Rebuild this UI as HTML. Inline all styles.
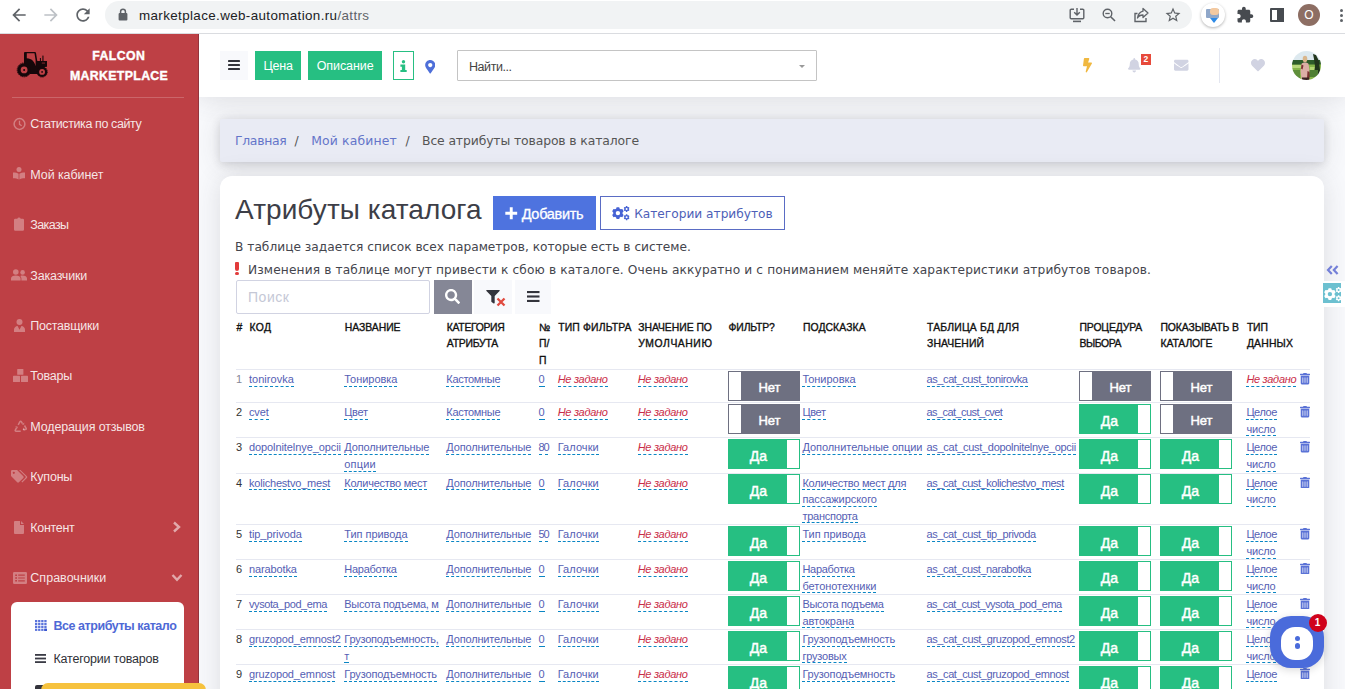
<!DOCTYPE html><html lang="ru"><head><meta charset="utf-8"><title>Все атрибуты товаров в каталоге</title><style>
*{box-sizing:border-box;margin:0;padding:0}
html,body{width:1345px;height:689px;overflow:hidden;background:#f8f9fc;font-family:"Liberation Sans",sans-serif;}
.a{position:absolute}
#chrome{left:0;top:0;width:1345px;height:34px;background:#fff;border-bottom:1px solid #dadce0}
#url{left:105px;top:1px;width:1087px;height:28px;border-radius:14px;background:#f1f3f4}
#side{left:0;top:34px;width:199px;height:655px;background:#be4045}
#top{left:199px;top:34px;width:1146px;height:63px;background:#fff;box-shadow:0 2px 26px rgba(58,59,69,.15)}
.si{font-size:12.5px;line-height:16px;color:rgba(255,255,255,.88)}
#bc{left:220px;top:118.5px;width:1104px;height:43px;background:#e9ebf4;box-shadow:0 2px 26px rgba(58,59,69,.15),0 2px 9px rgba(58,59,69,.16);border-radius:2px}
.bct{font-family:"DejaVu Sans","Liberation Sans",sans-serif;font-size:12.4px;line-height:17px;color:#555}
#card{left:220px;top:176px;width:1104px;height:540px;background:#fff;border-radius:12px;box-shadow:0 2px 26px rgba(58,59,69,.15)}
.btn{height:34px;top:196px}
.p{font-family:"DejaVu Sans","Liberation Sans",sans-serif;font-size:12.2px;line-height:16px;color:#44454d}
.th{font-size:10.4px;line-height:16.5px;color:#111;-webkit-text-stroke:0.35px #111}
.td{font-size:11px;line-height:16.5px;color:#333;}
.td u,.td i{text-decoration:none;border-bottom:1px dashed #0a86c4;color:#5560b4;padding-bottom:0.8px}
.td i{color:#c92c47;font-style:italic}
.td s{text-decoration:none;margin-right:-1.5px}
.hr{left:236px;width:1074px;height:1px;background:#e6e8f1}
.tg{width:72px;height:30px;overflow:hidden;color:#fff;font-size:13px;line-height:30px;text-align:center;-webkit-text-stroke:0.45px #fff}
.tg.on{background:#26bf82;border:1px solid #26bf82}
.tg.off{background:#6e7081;border:1px solid #6e7081}
.tg b{position:absolute;top:0;width:12px;height:28px;background:#fff}
.tg.on b{right:0}
.tg.off b{left:0;width:11.5px}
.tg.on span{position:absolute;left:0;width:59px;top:1px;font-size:14px}
.tg.off span{position:absolute;left:11px;width:59px;top:1px}
</style></head><body>
<div class="a" style="left:0;top:0;z-index:9">
<div id="chrome" class="a"></div>
<div id="url" class="a"></div>
<div class="a " style="left:139px;top:7px;white-space:nowrap;font-size:13.4px;line-height:17px;color:#202124;letter-spacing:0.373px;">marketplace.web-automation.ru<span style="color:#5f6368">/attrs</span></div>
<svg class="a" style="left:9px;top:5px;" width="20" height="20" viewBox="0 0 24 24"><path d="M20 11H7.83l5.59-5.59L12 4l-8 8 8 8 1.41-1.41L7.83 13H20v-2z" fill="#5f6368" /></svg>
<svg class="a" style="left:41px;top:5px;" width="20" height="20" viewBox="0 0 24 24"><path d="M12 4l-1.41 1.41L16.17 11H4v2h12.17l-5.58 5.59L12 20l8-8z" fill="#bdc1c6" /></svg>
<svg class="a" style="left:73px;top:5px;" width="20" height="20" viewBox="0 0 24 24"><path d="M17.65 6.35C16.2 4.9 14.21 4 12 4c-4.42 0-7.99 3.58-7.99 8s3.57 8 7.99 8c3.73 0 6.84-2.55 7.73-6h-2.08c-.82 2.33-3.04 4-5.65 4-3.31 0-6-2.69-6-6s2.69-6 6-6c1.66 0 3.14.69 4.22 1.78L13 11h7V4l-2.35 2.35z" fill="#5f6368" /></svg>
<svg class="a" style="left:118px;top:8px;" width="10" height="13" viewBox="0 0 10 13"><rect x="0.6" y="5" width="8.8" height="7.4" rx="1" fill="#5f6368"/><path d="M2.6 5.5V3.6a2.4 2.4 0 0 1 4.8 0V5.5" fill="none" stroke="#5f6368" stroke-width="1.5"/></svg>
<svg class="a" style="left:1069px;top:8px;" width="16" height="15" viewBox="0 0 16 15"><path d="M5 1.2H2.2a1 1 0 0 0-1 1v7.6a1 1 0 0 0 1 1H13.8a1 1 0 0 0 1-1V2.2a1 1 0 0 0-1-1H11" fill="none" stroke="#5f6368" stroke-width="1.4"/><path d="M8 0v6.5M5.2 4.2L8 7l2.8-2.8" fill="none" stroke="#5f6368" stroke-width="1.4"/><rect x="4" y="12.6" width="8" height="1.6" fill="#5f6368"/></svg>
<svg class="a" style="left:1102px;top:8px;" width="14" height="14" viewBox="0 0 14 14"><circle cx="5.5" cy="5.5" r="4.3" fill="none" stroke="#5f6368" stroke-width="1.4"/><path d="M8.7 8.7L13 13" stroke="#5f6368" stroke-width="1.6"/><path d="M3.3 5.5h4.4" stroke="#5f6368" stroke-width="1.3"/></svg>
<svg class="a" style="left:1133px;top:7px;" width="16" height="16" viewBox="0 0 16 16"><path d="M4.5 6.5H2v8h11V11" fill="none" stroke="#5f6368" stroke-width="1.4"/><path d="M10 1.5L15 6l-5 4.5V8C7 8 5.5 9 4.5 11 5 7.5 7 5 10 4.2z" fill="none" stroke="#5f6368" stroke-width="1.3" stroke-linejoin="round"/></svg>
<svg class="a" style="left:1164px;top:6px;" width="18" height="18" viewBox="0 0 24 24"><path d="M22 9.24l-7.19-.62L12 2 9.19 8.63 2 9.24l5.46 4.73L5.82 21 12 17.27 18.18 21l-1.63-7.03L22 9.24zM12 15.4l-3.76 2.27 1-4.28-3.32-2.88 4.38-.38L12 6.1l1.71 4.04 4.38.38-3.32 2.88 1 4.28L12 15.4z" fill="#5f6368" /></svg>
<div class="a" style="left:1201px;top:3px;width:24px;height:24px;border-radius:12px;background:#fff;box-shadow:0 1px 3px rgba(0,0,0,.3)"></div>
<div class="a" style="left:1206px;top:9px;width:13px;height:9px;background:#8fa7c9;border-radius:1px"></div>
<div class="a" style="left:1210px;top:8px;width:9px;height:7px;background:#f3c9a0;border-radius:3px"></div>
<div class="a" style="left:1210px;top:18px;width:0;height:0;border-left:4px solid transparent;border-right:4px solid transparent;border-top:5px solid #2d8ae6"></div>
<svg class="a" style="left:1236px;top:6px;" width="18" height="18" viewBox="0 0 24 24"><path d="M20.5 11H19V7c0-1.1-.9-2-2-2h-4V3.5C13 2.12 11.88 1 10.5 1S8 2.12 8 3.5V5H4c-1.1 0-1.99.9-1.99 2v3.8H3.5c1.49 0 2.7 1.21 2.7 2.7s-1.21 2.7-2.7 2.7H2V20c0 1.1.9 2 2 2h3.8v-1.5c0-1.49 1.21-2.7 2.7-2.7 1.49 0 2.7 1.21 2.7 2.7V22H17c1.1 0 2-.9 2-2v-4h1.5c1.38 0 2.5-1.12 2.5-2.5S21.88 11 20.5 11z" fill="#474b50" /></svg>
<div class="a" style="left:1270px;top:8px;width:14px;height:14px;border:2px solid #474b50;border-radius:1px"></div><div class="a" style="left:1277px;top:8px;width:7px;height:14px;background:#474b50"></div>
<div class="a" style="left:1298px;top:4px;width:22px;height:22px;border-radius:11px;background:#8d6e63;color:#fff;font-size:12px;line-height:22px;text-align:center">O</div>
<div class="a" style="left:1339.5px;top:9px;width:3px;height:3px;border-radius:2px;background:#5f6368"></div>
<div class="a" style="left:1339.5px;top:14px;width:3px;height:3px;border-radius:2px;background:#5f6368"></div>
<div class="a" style="left:1339.5px;top:19px;width:3px;height:3px;border-radius:2px;background:#5f6368"></div>
</div>
<div class="a" style="left:0;top:0;z-index:8">
<div id="side" class="a"></div>
<div class="a" style="left:198px;top:34px;width:1px;height:655px;background:rgba(40,20,40,.28)"></div>
<div class="a " style="left:92.2px;top:49.4px;white-space:nowrap;color:#fff;font-weight:bold;font-size:12.3px;line-height:14px;-webkit-text-stroke:0.4px #fff;letter-spacing:0.447px;">FALCON</div>
<div class="a " style="left:70px;top:68.5px;white-space:nowrap;color:#fff;font-weight:bold;font-size:12.3px;line-height:14px;-webkit-text-stroke:0.4px #fff;letter-spacing:0.352px;">MARKETPLACE</div>
<div class="a" style="left:11.5px;top:97px;width:172.5px;height:1px;background:rgba(255,255,255,.2)"></div>
<svg class="a" style="left:10px;top:44px;" width="50" height="42" viewBox="10 44 50 42"><g fill="#16070a"><path d="M24 53c0-.7.5-1.1 1.1-1.1h9.8c.6 0 1 .4 1.1 1l1.3 8.1H47v5.8l-4 .4-4.5 6.8H30l-6-8z"/><rect x="39.9" y="58" width="1" height="3.4"/><rect x="42.4" y="55.6" width="1.1" height="5.8"/><circle cx="24.1" cy="69.9" r="6.7"/><circle cx="24.1" cy="69.9" r="6.9" fill="none" stroke="#16070a" stroke-width="1" stroke-dasharray="1.3 .7"/><circle cx="42.1" cy="71.9" r="5.1"/><circle cx="42.1" cy="71.9" r="5.2" fill="none" stroke="#16070a" stroke-width=".9" stroke-dasharray="1.2 .65"/></g><path d="M26.8 53.3h7.7l1.1 7v5.9c-1-4.8-4-7.8-8.8-8z" fill="#be4045"/><rect x="41.8" y="62.3" width="3.2" height="1.6" fill="#5c1c20"/><circle cx="24.1" cy="69.9" r="3.4" fill="#be4045"/><circle cx="24.1" cy="69.9" r="1" fill="#16070a"/><circle cx="42.1" cy="71.9" r="2.9" fill="#be4045"/><circle cx="42.1" cy="71.9" r=".9" fill="#16070a"/></svg>
<div class="a si" style="left:30.3px;top:116.2px;white-space:nowrap;letter-spacing:-0.396px;">Статистика по сайту</div>
<svg class="a" style="left:13px;top:117px;" width="14" height="14" viewBox="0 0 14 14"><circle cx="6.5" cy="7" r="5.4" fill="none" stroke="rgba(255,255,255,.33)" stroke-width="1.5"/><path d="M6.5 3.8V7.3l2.2 1.4" fill="none" stroke="rgba(255,255,255,.33)" stroke-width="1.3"/></svg>
<div class="a si" style="left:30.3px;top:166.6px;white-space:nowrap;letter-spacing:-0.077px;">Мой кабинет</div>
<svg class="a" style="left:13px;top:167px;" width="12" height="13" viewBox="0 0 12 13"><circle cx="6" cy="2.6" r="2.5" fill="rgba(255,255,255,.33)"/><path d="M0 5.5c2.5 0 4.5.4 5.6 1.3v5.6C4.5 11.6 2.5 11.2 0 11.2zM12 5.5c-2.5 0-4.5.4-5.6 1.3v5.6c1.1-.8 3.1-1.2 5.6-1.2z" fill="rgba(255,255,255,.33)"/></svg>
<div class="a si" style="left:30.3px;top:217.1px;white-space:nowrap;letter-spacing:-0.616px;">Заказы</div>
<svg class="a" style="left:14px;top:217px;" width="10" height="14" viewBox="0 0 10 14"><path d="M1.2 1.8h2.1a1.8 1.8 0 0 1 3.4 0h2.1a1.2 1.2 0 0 1 1.2 1.2v9.6a1.2 1.2 0 0 1-1.2 1.2H1.2A1.2 1.2 0 0 1 0 12.6V3a1.2 1.2 0 0 1 1.2-1.2z" fill="rgba(255,255,255,.33)"/></svg>
<div class="a si" style="left:30.3px;top:267.6px;white-space:nowrap;letter-spacing:-0.166px;">Заказчики</div>
<svg class="a" style="left:11px;top:269px;" width="16" height="12" viewBox="0 0 16 12"><circle cx="4.8" cy="3" r="2.8" fill="rgba(255,255,255,.33)"/><circle cx="11.6" cy="3.4" r="2.3" fill="rgba(255,255,255,.33)"/><path d="M0 11.5V9.8c0-2 2-3.2 4.8-3.2s4.8 1.2 4.8 3.2v1.7zM10.4 11.5V9.6c0-1-.4-1.9-1.1-2.6.7-.3 1.5-.4 2.3-.4 2.5 0 4.4 1.1 4.4 3v1.9z" fill="rgba(255,255,255,.33)"/></svg>
<div class="a si" style="left:30.3px;top:318px;white-space:nowrap;letter-spacing:-0.244px;">Поставщики</div>
<svg class="a" style="left:14px;top:319px;" width="11" height="13" viewBox="0 0 11 13"><circle cx="5.5" cy="3" r="3" fill="rgba(255,255,255,.33)"/><path d="M0 13v-2.2c0-2.3 1.6-3.8 3.6-3.9l1.9 3.8 1.9-3.8c2 .1 3.6 1.6 3.6 3.9V13z" fill="rgba(255,255,255,.33)"/></svg>
<div class="a si" style="left:30.3px;top:368.4px;white-space:nowrap;letter-spacing:-0.2px;">Товары</div>
<svg class="a" style="left:13px;top:369px;" width="15" height="13" viewBox="0 0 15 13"><rect x="4.2" y="0" width="6.2" height="5.8" rx=".6" fill="rgba(255,255,255,.33)"/><rect x="0" y="6.8" width="7" height="6.2" rx=".6" fill="rgba(255,255,255,.33)"/><rect x="8" y="6.8" width="7" height="6.2" rx=".6" fill="rgba(255,255,255,.33)"/></svg>
<div class="a si" style="left:30.3px;top:418.9px;white-space:nowrap;letter-spacing:-0.143px;">Модерация отзывов</div>
<svg class="a" style="left:14px;top:420px;" width="13" height="13" viewBox="0 0 13 13"><path d="M4.2 4.8L6 1.6c.3-.5 1-.5 1.3 0l1.2 2M10.5 5.5l1.7 2.9c.3.5-.1 1.2-.7 1.2H9M6.7 11.3H2c-.6 0-1-.6-.7-1.2l1.2-2.2" fill="none" stroke="rgba(255,255,255,.33)" stroke-width="1.5"/><path d="M7.8 4.6l2.3.2.2-2.4zM9.8 7.6L8.6 9.7l2.2 1zM1 6.8l2.3-.6.7 2.3z" fill="rgba(255,255,255,.33)"/></svg>
<div class="a si" style="left:30.3px;top:469.4px;white-space:nowrap;letter-spacing:-0.228px;">Купоны</div>
<svg class="a" style="left:11px;top:470px;" width="17" height="13" viewBox="0 0 17 13"><path d="M0 1.2A1.2 1.2 0 0 1 1.2 0h4.9l6.2 6.2a1.2 1.2 0 0 1 0 1.7l-4.4 4.4a1.2 1.2 0 0 1-1.7 0L0 6.1zM2.8 3.9a1.1 1.1 0 1 0 0-2.2 1.1 1.1 0 0 0 0 2.2z" fill="rgba(255,255,255,.33)" fill-rule="evenodd"/><path d="M8 0h1.4l6.5 6.3a1.2 1.2 0 0 1 0 1.7l-4.6 4.6-.9-.9 4-4a1 1 0 0 0 0-1.4z" fill="rgba(255,255,255,.33)"/></svg>
<div class="a si" style="left:30.3px;top:519.8px;white-space:nowrap;letter-spacing:-0.302px;">Контент</div>
<svg class="a" style="left:14px;top:521px;" width="10" height="13" viewBox="0 0 10 13"><path d="M1 0h5v3.5a.5.5 0 0 0 .5.5H10v8a1 1 0 0 1-1 1H1a1 1 0 0 1-1-1V1a1 1 0 0 1 1-1zM7 0l3 3H7z" fill="rgba(255,255,255,.33)"/></svg>
<div class="a si" style="left:30.3px;top:570.2px;white-space:nowrap;letter-spacing:0.027px;">Справочники</div>
<svg class="a" style="left:13px;top:572px;" width="14" height="12" viewBox="0 0 14 12"><path d="M1.2 0h11.6A1.2 1.2 0 0 1 14 1.2v9.6a1.2 1.2 0 0 1-1.2 1.2H1.2A1.2 1.2 0 0 1 0 10.8V1.2A1.2 1.2 0 0 1 1.2 0zM2.2 2.4v1.6h1.8V2.4zM5.2 2.6v1.2h6.6V2.6zM2.2 5.2v1.6h1.8V5.2zM5.2 5.4v1.2h6.6V5.4zM2.2 8v1.6h1.8V8zM5.2 8.2v1.2h6.6V8.2z" fill="rgba(255,255,255,.33)" fill-rule="evenodd"/></svg>
<svg class="a" style="left:172px;top:521px;" width="9" height="12" viewBox="0 0 9 12"><path d="M2 1.5L7 6 2 10.5" fill="none" stroke="rgba(255,255,255,.55)" stroke-width="2.4"/></svg>
<svg class="a" style="left:171px;top:573px;" width="12" height="9" viewBox="0 0 12 9"><path d="M1.5 2L6 6.8 10.5 2" fill="none" stroke="rgba(255,255,255,.55)" stroke-width="2.4"/></svg>
<div class="a" style="left:11px;top:602px;width:173px;height:100px;background:#fff;border-radius:6px"></div>
<div class="a " style="left:53.5px;top:618px;white-space:nowrap;font-size:12.5px;line-height:16px;font-weight:bold;color:#4e69d6;letter-spacing:-0.451px;">Все атрибуты катало</div>
<div class="a " style="left:53.5px;top:651px;white-space:nowrap;font-size:12.5px;line-height:16px;color:#2f3037;letter-spacing:-0.204px;">Категории товаров</div>
<svg class="a" style="left:35px;top:620px;" width="12" height="11" viewBox="0 0 12 11"><rect x="0" y="0" width="2.3" height="2.2" fill="#5a73db"/><rect x="3.1" y="0" width="2.3" height="2.2" fill="#5a73db"/><rect x="6.2" y="0" width="2.3" height="2.2" fill="#5a73db"/><rect x="9.3" y="0" width="2.3" height="2.2" fill="#5a73db"/><rect x="0" y="2.9" width="2.3" height="2.2" fill="#5a73db"/><rect x="3.1" y="2.9" width="2.3" height="2.2" fill="#5a73db"/><rect x="6.2" y="2.9" width="2.3" height="2.2" fill="#5a73db"/><rect x="9.3" y="2.9" width="2.3" height="2.2" fill="#5a73db"/><rect x="0" y="5.8" width="2.3" height="2.2" fill="#5a73db"/><rect x="3.1" y="5.8" width="2.3" height="2.2" fill="#5a73db"/><rect x="6.2" y="5.8" width="2.3" height="2.2" fill="#5a73db"/><rect x="9.3" y="5.8" width="2.3" height="2.2" fill="#5a73db"/><rect x="0" y="8.7" width="2.3" height="2.2" fill="#5a73db"/><rect x="3.1" y="8.7" width="2.3" height="2.2" fill="#5a73db"/><rect x="6.2" y="8.7" width="2.3" height="2.2" fill="#5a73db"/><rect x="9.3" y="8.7" width="2.3" height="2.2" fill="#5a73db"/><rect x="9.3" y="8.7" width="2.7" height="2.3" fill="#3b57d0"/></svg>
<svg class="a" style="left:35px;top:654px;" width="11" height="9" viewBox="0 0 11 9"><rect y="0" width="11" height="1.8" fill="#3a3b45"/><rect y="3.6" width="11" height="1.8" fill="#3a3b45"/><rect y="7.2" width="11" height="1.8" fill="#3a3b45"/></svg>
<div class="a" style="left:35px;top:685px;width:10px;height:8px;background:#33343c;border-radius:2px"></div>
<div class="a" style="left:41px;top:683px;width:165px;height:20px;background:#f6c23e;border-radius:7px"></div>
</div>
<div id="top" class="a"></div>
<div class="a" style="left:220px;top:51px;width:28px;height:29px;background:#f8f9fc"></div>
<svg class="a" style="left:228px;top:60px;" width="12" height="10" viewBox="0 0 12 10"><rect y="0" width="12" height="2" rx=".4" fill="#33343c"/><rect y="4" width="12" height="2" rx=".4" fill="#33343c"/><rect y="8" width="12" height="2" rx=".4" fill="#33343c"/></svg>
<div class="a" style="left:255px;top:51px;width:46px;height:29px;background:#26bf82"></div>
<div class="a " style="left:263.5px;top:59px;white-space:nowrap;color:#fff;font-size:12.5px;line-height:15px;letter-spacing:-0.188px;">Цена</div>
<div class="a" style="left:308px;top:51px;width:74px;height:29px;background:#26bf82"></div>
<div class="a " style="left:316.7px;top:59px;white-space:nowrap;color:#fff;font-size:12.5px;line-height:15px;letter-spacing:-0.074px;">Описание</div>
<div class="a" style="left:393px;top:51px;width:21px;height:29px;border:1px solid #26bf82;background:#fff"></div>
<svg class="a" style="left:400px;top:59.5px;" width="7" height="12.5" viewBox="0 0 7 12.5"><circle cx="3.5" cy="1.7" r="1.7" fill="#26bf82"/><path d="M.4 4.5h4.8v5.6h1.5v2.2H.4v-2.2h1.5V6.7H.4z" fill="#26bf82"/></svg>
<svg class="a" style="left:424.5px;top:60px;" width="10.5" height="13.5" viewBox="0 0 384 512"><path d="M172.268 501.67C26.97 291.031 0 269.413 0 192 0 85.961 85.961 0 192 0s192 85.961 192 192c0 77.413-26.97 99.031-172.268 309.67-9.535 13.774-29.93 13.773-39.464 0zM192 272c44.183 0 80-35.817 80-80s-35.817-80-80-80-80 35.817-80 80 35.817 80 80 80z" fill="#4e6fd9" /></svg>
<div class="a" style="left:457px;top:50px;width:360px;height:31px;border:1px solid #c4c4c4;background:#fff;border-radius:1px"></div>
<div class="a " style="left:469px;top:59px;white-space:nowrap;font-size:12.5px;line-height:16px;color:#444;letter-spacing:-0.442px;">Найти...</div>
<div class="a" style="left:799px;top:64.5px;width:0;height:0;border-left:3.5px solid transparent;border-right:3.5px solid transparent;border-top:3.5px solid #999"></div>
<svg class="a" style="left:1083px;top:58px;" width="9" height="14.5" viewBox="0 0 320 512"><path d="M296 160H180.6l42.6-129.8C227.2 15 215.7 0 200 0H56C44 0 33.8 8.9 32.2 20.8l-32 240C-1.7 275.2 9.5 288 24 288h118.7L96.6 482.5c-3.6 15.2 8 29.5 23.3 29.5 8.4 0 16.4-4.4 20.8-12l176-304c9.3-15.9-2.2-36-20.7-36z" fill="#f0b840" /></svg>
<svg class="a" style="left:1128px;top:58px;" width="12.5" height="14.5" viewBox="0 0 448 512"><path d="M224 512c35.32 0 63.97-28.65 63.97-64H160.03c0 35.35 28.65 64 63.97 64zm215.39-149.71c-19.32-20.76-55.47-51.99-55.47-154.29 0-77.7-54.48-139.9-127.94-155.16V32c0-17.67-14.32-32-31.98-32s-31.98 14.33-31.98 32v20.84C118.56 68.1 64.08 130.3 64.08 208c0 102.3-36.15 133.53-55.47 154.29-6 6.45-8.66 14.16-8.61 21.71.11 16.4 12.98 32 32.1 32h383.8c19.12 0 32-15.6 32.1-32 .05-7.55-2.61-15.27-8.61-21.71z" fill="#d1d3e2" /></svg>
<div class="a" style="left:1140.5px;top:54px;width:10.5px;height:11px;background:#e74a3b;color:#fff;font-size:8.5px;font-weight:bold;line-height:11px;text-align:center">2</div>
<svg class="a" style="left:1174px;top:57.5px;" width="14.5" height="14.5" viewBox="0 0 512 512"><path d="M502.3 190.8c3.9-3.1 9.7-.2 9.7 4.7V400c0 26.5-21.5 48-48 48H48c-26.5 0-48-21.5-48-48V195.6c0-5 5.7-7.8 9.7-4.7 22.4 17.4 52.1 39.5 154.1 113.6 21.1 15.4 56.7 47.8 92.2 47.6 35.7.3 72-32.8 92.3-47.6 102-74.1 131.6-96.3 154-113.7zM256 320c23.2.4 56.6-29.2 73.4-41.4 132.7-96.3 142.8-104.7 173.4-128.7 5.8-4.5 9.2-11.5 9.2-18.9v-19c0-26.5-21.5-48-48-48H48C21.5 64 0 85.5 0 112v19c0 7.4 3.4 14.3 9.2 18.9 30.6 23.9 40.7 32.4 173.4 128.7 16.8 12.2 50.2 41.8 73.4 41.4z" fill="#d1d3e2" /></svg>
<div class="a" style="left:1219px;top:48px;width:1px;height:35px;background:#e3e6f0"></div>
<svg class="a" style="left:1251px;top:57.5px;" width="14" height="14.5" viewBox="0 0 512 512"><path d="M462.3 62.6C407.5 15.9 326 24.3 275.7 76.2L256 96.5l-19.7-20.3C186.1 24.3 104.5 15.9 49.7 62.6c-62.8 53.6-66.1 149.8-9.9 207.9l193.5 199.8c12.5 12.9 32.8 12.9 45.3 0l193.5-199.8c56.3-58.1 53-154.3-9.8-207.9z" fill="#d1d3e2" /></svg>
<svg class="a" style="left:1292px;top:51px" width="29" height="29" viewBox="0 0 29 29"><defs><clipPath id="av"><circle cx="14.5" cy="14.5" r="14.5"/></clipPath><filter id="bl" x="-10%" y="-10%" width="120%" height="120%"><feGaussianBlur stdDeviation=".7"/></filter></defs><g clip-path="url(#av)"><g filter="url(#bl)"><rect x="-2" y="-2" width="33" height="33" fill="#86b548"/><rect x="-2" y="-2" width="33" height="12" fill="#dde9ef"/><rect x="-2" y="9" width="33" height="4.5" fill="#2f5b2c"/><rect x="-2" y="14" width="12" height="3" fill="#b7d77a"/><rect x="0" y="19" width="8" height="8" fill="#5f8f3a"/><rect x="18" y="16" width="6" height="3" fill="#b4d873"/><path d="M21 3l3 1 3 6 1 9-2 8-4-4 1-8-1-7z" fill="#22361d"/><rect x="17" y="19" width="9" height="7" fill="#4f7f30"/><ellipse cx="13" cy="8" rx="2.3" ry="3.2" fill="#d9b68c"/><path d="M9.5 13c1-2 6-2 7 0l1 6-1 10h-7l-1-9z" fill="#dcaea6"/><path d="M9.5 13.5l2 1-1 4-1.5-1zM15.5 20l2 1v7h-2.5z" fill="#7b3030"/><rect x="10" y="26.5" width="7" height="3" fill="#3b2320"/></g></g></svg>
<div id="bc" class="a"></div>
<div class="a bct" style="left:235px;top:132px;white-space:nowrap;color:#6475c9;letter-spacing:-0.305px;">Главная</div>
<div class="a bct" style="left:294.5px;top:132px;white-space:nowrap;">/</div>
<div class="a bct" style="left:311.2px;top:132px;white-space:nowrap;color:#6475c9;letter-spacing:0.152px;">Мой кабинет</div>
<div class="a bct" style="left:405.5px;top:132px;white-space:nowrap;">/</div>
<div class="a bct" style="left:422px;top:132px;white-space:nowrap;letter-spacing:-0.122px;">Все атрибуты товаров в каталоге</div>
<div id="card" class="a"></div>
<h1 class="a " style="left:235px;top:193px;white-space:nowrap;font-size:28px;line-height:34px;font-weight:normal;color:#3d3e47;letter-spacing:0.066px;">Атрибуты каталога</h1>
<div class="a btn" style="left:493px;width:103px;background:#4e73df"></div>
<svg class="a" style="left:505px;top:207px;" width="12.5" height="12.5" viewBox="0 0 12 12"><path d="M4.6 0.3h2.8v4.3h4.3v2.8H7.4v4.3H4.6V7.4H0.3V4.6h4.3z" fill="#fff"/></svg>
<div class="a " style="left:521.7px;top:204.5px;white-space:nowrap;font-size:14.5px;line-height:18px;color:#fff;-webkit-text-stroke:0.3px #fff;letter-spacing:-0.299px;">Добавить</div>
<div class="a btn" style="left:600px;width:185px;border:1px solid #5a6cc4;background:#fff"></div>
<svg class="a" style="left:612px;top:205.5px;overflow:visible" width="18" height="14" viewBox="0 -0.5 18 14"><path d="M10.56 7.21 L11.63 8.39 L10.32 10.66 L8.76 10.33 L7.7 10.94 L7.21 12.46 L4.59 12.46 L4.1 10.94 L3.04 10.33 L1.48 10.66 L0.17 8.39 L1.24 7.21 L1.24 5.99 L0.17 4.81 L1.48 2.54 L3.04 2.87 L4.1 2.26 L4.59 0.74 L7.21 0.74 L7.7 2.26 L8.76 2.87 L10.32 2.54 L11.63 4.81 L10.56 5.99Z M3.7 6.6 a2.2 2.2 0 1 0 4.4 0 a2.2 2.2 0 1 0 -4.4 0Z M16.83 2.79 L17.46 3.4 L16.81 4.53 L15.97 4.29 L15.46 4.58 L15.25 5.43 L13.95 5.43 L13.74 4.58 L13.23 4.29 L12.39 4.53 L11.74 3.4 L12.37 2.79 L12.37 2.21 L11.74 1.6 L12.39 0.47 L13.23 0.71 L13.74 0.42 L13.95 -0.43 L15.25 -0.43 L15.46 0.42 L15.97 0.71 L16.81 0.47 L17.46 1.6 L16.83 2.21Z M13.6 2.5 a1 1 0 1 0 2 0 a1 1 0 1 0 -2 0Z M16.83 10.99 L17.46 11.6 L16.81 12.73 L15.97 12.49 L15.46 12.78 L15.25 13.63 L13.95 13.63 L13.74 12.78 L13.23 12.49 L12.39 12.73 L11.74 11.6 L12.37 10.99 L12.37 10.41 L11.74 9.8 L12.39 8.67 L13.23 8.91 L13.74 8.62 L13.95 7.77 L15.25 7.77 L15.46 8.62 L15.97 8.91 L16.81 8.67 L17.46 9.8 L16.83 10.41Z M13.6 10.7 a1 1 0 1 0 2 0 a1 1 0 1 0 -2 0Z" fill="#4662d4" fill-rule="evenodd"/></svg>
<div class="a " style="left:634.2px;top:205.7px;white-space:nowrap;font-family:'DejaVu Sans','Liberation Sans',sans-serif;font-size:12.2px;line-height:16px;color:#4e5fb8;letter-spacing:-0.013px;">Категории атрибутов</div>
<div class="a p" style="left:235px;top:239px;white-space:nowrap;letter-spacing:0.014px;">В таблице задается список всех параметров, которые есть в системе.</div>
<div class="a p" style="left:248px;top:261.5px;white-space:nowrap;letter-spacing:0.129px;">Изменения в таблице могут привести к сбою в каталоге. Очень аккуратно и с пониманием меняйте характеристики атрибутов товаров.</div>
<div class="a" style="left:235px;top:262px;width:4px;height:8.5px;background:#e23b3b;border-radius:1px 1px 2px 2px"></div><div class="a" style="left:235px;top:272px;width:4px;height:3px;background:#e23b3b;border-radius:1.5px"></div>
<div class="a" style="left:236px;top:280px;width:194px;height:34px;border:1px solid #d1d3e2;border-radius:2px;background:#fff"></div>
<div class="a " style="left:248px;top:289px;white-space:nowrap;font-size:14px;line-height:17px;color:#c5c8d6;letter-spacing:0.551px;">Поиск</div>
<div class="a" style="left:434px;top:280px;width:38px;height:34px;background:#858796"></div>
<svg class="a" style="left:445px;top:289px;" width="15" height="15" viewBox="0 0 512 512"><path d="M505 442.7L405.3 343c-4.5-4.5-10.6-7-17-7H372c27.6-35.3 44-79.7 44-128C416 93.1 322.9 0 208 0S0 93.1 0 208s93.1 208 208 208c48.3 0 92.7-16.4 128-44v16.3c0 6.4 2.5 12.5 7 17l99.7 99.7c9.4 9.4 24.6 9.4 33.9 0l28.3-28.3c9.4-9.4 9.4-24.6.1-34zM208 336c-70.7 0-128-57.2-128-128 0-70.7 57.2-128 128-128 70.7 0 128 57.2 128 128 0 70.7-57.2 128-128 128z" fill="#fff" /></svg>
<div class="a" style="left:474px;top:280px;width:38px;height:34px;background:#f8f9fc"></div>
<svg class="a" style="left:486px;top:290px;" width="14" height="13.5" viewBox="0 0 512 512"><path d="M487.976 0H24.028C2.71 0-8.047 25.866 7.058 40.971L192 225.941V432c0 7.831 3.821 15.17 10.237 19.662l80 55.98C298.02 518.69 320 507.493 320 487.98V225.941l184.947-184.97C520.021 25.896 509.338 0 487.976 0z" fill="#33343c" /></svg>
<svg class="a" style="left:496px;top:296.5px;" width="10" height="10" viewBox="0 0 10 10"><path d="M1.5 1.5l7 7M8.5 1.5l-7 7" stroke="#f8f9fc" stroke-width="4"/><path d="M1.5 1.5l7 7M8.5 1.5l-7 7" stroke="#e04a3f" stroke-width="2.3"/></svg>
<div class="a" style="left:515px;top:280px;width:36px;height:34px;background:#f8f9fc"></div>
<svg class="a" style="left:527px;top:291px;" width="12.5" height="11" viewBox="0 0 12.5 11"><rect y="0" width="12.5" height="2.1" fill="#33343c"/><rect y="4.45" width="12.5" height="2.1" fill="#33343c"/><rect y="8.9" width="12.5" height="2.1" fill="#33343c"/></svg>
<div class="a th" style="left:236.5px;top:319.5px;white-space:nowrap;">#</div>
<div class="a th" style="left:249.5px;top:319.5px;white-space:nowrap;letter-spacing:0.336px;">КОД</div>
<div class="a th" style="left:344.8px;top:319.5px;white-space:nowrap;letter-spacing:-0.045px;">НАЗВАНИЕ</div>
<div class="a th" style="left:446.8px;top:319.5px;white-space:nowrap;letter-spacing:-0.311px;">КАТЕГОРИЯ</div>
<div class="a th" style="left:446.8px;top:336px;white-space:nowrap;letter-spacing:-0.241px;">АТРИБУТА</div>
<div class="a th" style="left:539.1px;top:319.5px;white-space:nowrap;letter-spacing:0.844px;">№</div>
<div class="a th" style="left:539.1px;top:336px;white-space:nowrap;">П/</div>
<div class="a th" style="left:539.1px;top:352.5px;white-space:nowrap;">П</div>
<div class="a th" style="left:558.2px;top:319.5px;white-space:nowrap;letter-spacing:0.164px;">ТИП ФИЛЬТРА</div>
<div class="a th" style="left:638.2px;top:319.5px;white-space:nowrap;letter-spacing:-0.039px;">ЗНАЧЕНИЕ ПО</div>
<div class="a th" style="left:638.2px;top:336px;white-space:nowrap;letter-spacing:0.541px;">УМОЛЧАНИЮ</div>
<div class="a th" style="left:728.5px;top:319.5px;white-space:nowrap;letter-spacing:-0.105px;">ФИЛЬТР?</div>
<div class="a th" style="left:802.9px;top:319.5px;white-space:nowrap;letter-spacing:0.088px;">ПОДСКАЗКА</div>
<div class="a th" style="left:927px;top:319.5px;white-space:nowrap;letter-spacing:0.18px;">ТАБЛИЦА БД ДЛЯ</div>
<div class="a th" style="left:927px;top:336px;white-space:nowrap;letter-spacing:0.114px;">ЗНАЧЕНИЙ</div>
<div class="a th" style="left:1079.5px;top:319.5px;white-space:nowrap;letter-spacing:-0.137px;">ПРОЦЕДУРА</div>
<div class="a th" style="left:1079.5px;top:336px;white-space:nowrap;letter-spacing:-0.419px;">ВЫБОРА</div>
<div class="a th" style="left:1160.5px;top:319.5px;white-space:nowrap;letter-spacing:-0.098px;">ПОКАЗЫВАТЬ В</div>
<div class="a th" style="left:1160.5px;top:336px;white-space:nowrap;letter-spacing:-0.114px;">КАТАЛОГЕ</div>
<div class="a th" style="left:1246.9px;top:319.5px;white-space:nowrap;letter-spacing:-0.148px;">ТИП</div>
<div class="a th" style="left:1246.9px;top:336px;white-space:nowrap;letter-spacing:0.178px;">ДАННЫХ</div>
<div class="a hr" style="top:369.3px"></div>
<div class="a td" style="left:236px;top:371.2px;white-space:nowrap;color:#858796;">1</div>
<div class="a td" style="left:249px;top:371.2px;white-space:nowrap;letter-spacing:0.02px;"><u>tonirovka</u></div>
<div class="a td" style="left:344.3px;top:371.2px;white-space:nowrap;letter-spacing:-0.032px;"><u>Тонировка</u></div>
<div class="a td" style="left:446.3px;top:371.2px;white-space:nowrap;letter-spacing:-0.315px;"><u>Кастомные</u></div>
<div class="a td" style="left:538.6px;top:371.2px;white-space:nowrap;"><u>0</u></div>
<div class="a td" style="left:557.7px;top:371.2px;white-space:nowrap;letter-spacing:-0.299px;"><i>Не задано</i></div>
<div class="a td" style="left:637.7px;top:371.2px;white-space:nowrap;letter-spacing:-0.299px;"><i>Не задано</i></div>
<div class="a td" style="left:802.4px;top:371.2px;white-space:nowrap;letter-spacing:-0.032px;"><u>Тонировка</u></div>
<div class="a td" style="left:926.5px;top:371.2px;white-space:nowrap;letter-spacing:-0.398px;"><u>as_cat_cust_tonirovka</u></div>
<div class="a td" style="left:1246.4px;top:371.2px;white-space:nowrap;letter-spacing:-0.299px;"><i>Не задано</i></div>
<div class="a tg off" style="left:728px;top:371.1px"><span>Нет</span><b></b></div>
<div class="a tg off" style="left:1079px;top:371.1px"><span>Нет</span><b></b></div>
<div class="a tg off" style="left:1160px;top:371.1px"><span>Нет</span><b></b></div>
<svg class="a" style="left:1299.7px;top:373.2px;" width="10" height="11.4" viewBox="0 0 448 512"><path d="M32 464a48 48 0 0 0 48 48h288a48 48 0 0 0 48-48V128H32zm272-256a16 16 0 0 1 32 0v224a16 16 0 0 1-32 0zm-96 0a16 16 0 0 1 32 0v224a16 16 0 0 1-32 0zm-96 0a16 16 0 0 1 32 0v224a16 16 0 0 1-32 0zM432 32H312l-9.4-18.7A24 24 0 0 0 281.1 0H166.8a23.72 23.72 0 0 0-21.4 13.3L136 32H16A16 16 0 0 0 0 48v32a16 16 0 0 0 16 16h416a16 16 0 0 0 16-16V48a16 16 0 0 0-16-16z" fill="#5a72d6" /></svg>
<div class="a hr" style="top:402.3px"></div>
<div class="a td" style="left:236px;top:404.2px;white-space:nowrap;">2</div>
<div class="a td" style="left:249px;top:404.2px;white-space:nowrap;letter-spacing:-0.163px;"><u>cvet</u></div>
<div class="a td" style="left:344.3px;top:404.2px;white-space:nowrap;letter-spacing:-0.319px;"><u>Цвет</u></div>
<div class="a td" style="left:446.3px;top:404.2px;white-space:nowrap;letter-spacing:-0.315px;"><u>Кастомные</u></div>
<div class="a td" style="left:538.6px;top:404.2px;white-space:nowrap;"><u>0</u></div>
<div class="a td" style="left:557.7px;top:404.2px;white-space:nowrap;letter-spacing:-0.299px;"><i>Не задано</i></div>
<div class="a td" style="left:637.7px;top:404.2px;white-space:nowrap;letter-spacing:-0.299px;"><i>Не задано</i></div>
<div class="a td" style="left:802.4px;top:404.2px;white-space:nowrap;letter-spacing:-0.319px;"><u>Цвет</u></div>
<div class="a td" style="left:926.5px;top:404.2px;white-space:nowrap;letter-spacing:-0.573px;"><u>as_cat_cust_cvet</u></div>
<div class="a td" style="left:1246.4px;top:404.2px;white-space:nowrap;letter-spacing:-0.418px;"><u>Целое</u></div>
<div class="a td" style="left:1246.4px;top:420.7px;white-space:nowrap;letter-spacing:-0.187px;"><u>число</u></div>
<div class="a tg off" style="left:728px;top:404.1px"><span>Нет</span><b></b></div>
<div class="a tg on" style="left:1079px;top:404.1px"><span>Да</span><b></b></div>
<div class="a tg off" style="left:1160px;top:404.1px"><span>Нет</span><b></b></div>
<svg class="a" style="left:1299.7px;top:406.2px;" width="10" height="11.4" viewBox="0 0 448 512"><path d="M32 464a48 48 0 0 0 48 48h288a48 48 0 0 0 48-48V128H32zm272-256a16 16 0 0 1 32 0v224a16 16 0 0 1-32 0zm-96 0a16 16 0 0 1 32 0v224a16 16 0 0 1-32 0zm-96 0a16 16 0 0 1 32 0v224a16 16 0 0 1-32 0zM432 32H312l-9.4-18.7A24 24 0 0 0 281.1 0H166.8a23.72 23.72 0 0 0-21.4 13.3L136 32H16A16 16 0 0 0 0 48v32a16 16 0 0 0 16 16h416a16 16 0 0 0 16-16V48a16 16 0 0 0-16-16z" fill="#5a72d6" /></svg>
<div class="a hr" style="top:437.4px"></div>
<div class="a td" style="left:236px;top:439.3px;white-space:nowrap;">3</div>
<div class="a td" style="left:249px;top:439.3px;white-space:nowrap;letter-spacing:-0.088px;"><u>dopolnitelnye_opcii</u></div>
<div class="a td" style="left:344.3px;top:439.3px;white-space:nowrap;letter-spacing:-0.16px;"><u>Дополнительные</u></div>
<div class="a td" style="left:344.3px;top:455.8px;white-space:nowrap;letter-spacing:0.157px;"><u>опции</u></div>
<div class="a td" style="left:446.3px;top:439.3px;white-space:nowrap;letter-spacing:-0.16px;"><u>Дополнительные</u></div>
<div class="a td" style="left:538.6px;top:439.3px;white-space:nowrap;letter-spacing:-1.25px;"><u>80</u></div>
<div class="a td" style="left:557.7px;top:439.3px;white-space:nowrap;letter-spacing:0.073px;"><u>Галочки</u></div>
<div class="a td" style="left:637.7px;top:439.3px;white-space:nowrap;letter-spacing:-0.299px;"><i>Не задано</i></div>
<div class="a td" style="left:802.4px;top:439.3px;white-space:nowrap;letter-spacing:-0.042px;"><u>Дополнительные опции</u></div>
<div class="a td" style="left:926.5px;top:439.3px;white-space:nowrap;letter-spacing:-0.293px;"><u>as_cat_cust_dopolnitelnye_opcii</u></div>
<div class="a td" style="left:1246.4px;top:439.3px;white-space:nowrap;letter-spacing:-0.418px;"><u>Целое</u></div>
<div class="a td" style="left:1246.4px;top:455.8px;white-space:nowrap;letter-spacing:-0.187px;"><u>число</u></div>
<div class="a tg on" style="left:728px;top:439.2px"><span>Да</span><b></b></div>
<div class="a tg on" style="left:1079px;top:439.2px"><span>Да</span><b></b></div>
<div class="a tg on" style="left:1160px;top:439.2px"><span>Да</span><b></b></div>
<svg class="a" style="left:1299.7px;top:441.3px;" width="10" height="11.4" viewBox="0 0 448 512"><path d="M32 464a48 48 0 0 0 48 48h288a48 48 0 0 0 48-48V128H32zm272-256a16 16 0 0 1 32 0v224a16 16 0 0 1-32 0zm-96 0a16 16 0 0 1 32 0v224a16 16 0 0 1-32 0zm-96 0a16 16 0 0 1 32 0v224a16 16 0 0 1-32 0zM432 32H312l-9.4-18.7A24 24 0 0 0 281.1 0H166.8a23.72 23.72 0 0 0-21.4 13.3L136 32H16A16 16 0 0 0 0 48v32a16 16 0 0 0 16 16h416a16 16 0 0 0 16-16V48a16 16 0 0 0-16-16z" fill="#5a72d6" /></svg>
<div class="a hr" style="top:472.6px"></div>
<div class="a td" style="left:236px;top:474.5px;white-space:nowrap;">4</div>
<div class="a td" style="left:249px;top:474.5px;white-space:nowrap;letter-spacing:-0.205px;"><u>kolichestvo_mest</u></div>
<div class="a td" style="left:344.3px;top:474.5px;white-space:nowrap;letter-spacing:-0.24px;"><u>Количество мест</u></div>
<div class="a td" style="left:446.3px;top:474.5px;white-space:nowrap;letter-spacing:-0.16px;"><u>Дополнительные</u></div>
<div class="a td" style="left:538.6px;top:474.5px;white-space:nowrap;"><u>0</u></div>
<div class="a td" style="left:557.7px;top:474.5px;white-space:nowrap;letter-spacing:0.073px;"><u>Галочки</u></div>
<div class="a td" style="left:637.7px;top:474.5px;white-space:nowrap;letter-spacing:-0.299px;"><i>Не задано</i></div>
<div class="a td" style="left:802.4px;top:474.5px;white-space:nowrap;letter-spacing:-0.234px;"><u>Количество мест для</u></div>
<div class="a td" style="left:802.4px;top:491px;white-space:nowrap;letter-spacing:-0.055px;"><u>пассажирского</u></div>
<div class="a td" style="left:802.4px;top:507.5px;white-space:nowrap;letter-spacing:-0.26px;"><u>транспорта</u></div>
<div class="a td" style="left:926.5px;top:474.5px;white-space:nowrap;letter-spacing:-0.425px;"><u>as_cat_cust_kolichestvo_mest</u></div>
<div class="a td" style="left:1246.4px;top:474.5px;white-space:nowrap;letter-spacing:-0.418px;"><u>Целое</u></div>
<div class="a td" style="left:1246.4px;top:491px;white-space:nowrap;letter-spacing:-0.187px;"><u>число</u></div>
<div class="a tg on" style="left:728px;top:474.4px"><span>Да</span><b></b></div>
<div class="a tg on" style="left:1079px;top:474.4px"><span>Да</span><b></b></div>
<div class="a tg on" style="left:1160px;top:474.4px"><span>Да</span><b></b></div>
<svg class="a" style="left:1299.7px;top:476.5px;" width="10" height="11.4" viewBox="0 0 448 512"><path d="M32 464a48 48 0 0 0 48 48h288a48 48 0 0 0 48-48V128H32zm272-256a16 16 0 0 1 32 0v224a16 16 0 0 1-32 0zm-96 0a16 16 0 0 1 32 0v224a16 16 0 0 1-32 0zm-96 0a16 16 0 0 1 32 0v224a16 16 0 0 1-32 0zM432 32H312l-9.4-18.7A24 24 0 0 0 281.1 0H166.8a23.72 23.72 0 0 0-21.4 13.3L136 32H16A16 16 0 0 0 0 48v32a16 16 0 0 0 16 16h416a16 16 0 0 0 16-16V48a16 16 0 0 0-16-16z" fill="#5a72d6" /></svg>
<div class="a hr" style="top:524.4px"></div>
<div class="a td" style="left:236px;top:526.3px;white-space:nowrap;">5</div>
<div class="a td" style="left:249px;top:526.3px;white-space:nowrap;letter-spacing:-0.083px;"><u>tip_privoda</u></div>
<div class="a td" style="left:344.3px;top:526.3px;white-space:nowrap;letter-spacing:-0.045px;"><u>Тип привода</u></div>
<div class="a td" style="left:446.3px;top:526.3px;white-space:nowrap;letter-spacing:-0.16px;"><u>Дополнительные</u></div>
<div class="a td" style="left:538.6px;top:526.3px;white-space:nowrap;letter-spacing:-1.25px;"><u>50</u></div>
<div class="a td" style="left:557.7px;top:526.3px;white-space:nowrap;letter-spacing:0.073px;"><u>Галочки</u></div>
<div class="a td" style="left:637.7px;top:526.3px;white-space:nowrap;letter-spacing:-0.299px;"><i>Не задано</i></div>
<div class="a td" style="left:802.4px;top:526.3px;white-space:nowrap;letter-spacing:-0.045px;"><u>Тип привода</u></div>
<div class="a td" style="left:926.5px;top:526.3px;white-space:nowrap;letter-spacing:-0.411px;"><u>as_cat_cust_tip_privoda</u></div>
<div class="a td" style="left:1246.4px;top:526.3px;white-space:nowrap;letter-spacing:-0.418px;"><u>Целое</u></div>
<div class="a td" style="left:1246.4px;top:542.8px;white-space:nowrap;letter-spacing:-0.187px;"><u>число</u></div>
<div class="a tg on" style="left:728px;top:526.2px"><span>Да</span><b></b></div>
<div class="a tg on" style="left:1079px;top:526.2px"><span>Да</span><b></b></div>
<div class="a tg on" style="left:1160px;top:526.2px"><span>Да</span><b></b></div>
<svg class="a" style="left:1299.7px;top:528.3px;" width="10" height="11.4" viewBox="0 0 448 512"><path d="M32 464a48 48 0 0 0 48 48h288a48 48 0 0 0 48-48V128H32zm272-256a16 16 0 0 1 32 0v224a16 16 0 0 1-32 0zm-96 0a16 16 0 0 1 32 0v224a16 16 0 0 1-32 0zm-96 0a16 16 0 0 1 32 0v224a16 16 0 0 1-32 0zM432 32H312l-9.4-18.7A24 24 0 0 0 281.1 0H166.8a23.72 23.72 0 0 0-21.4 13.3L136 32H16A16 16 0 0 0 0 48v32a16 16 0 0 0 16 16h416a16 16 0 0 0 16-16V48a16 16 0 0 0-16-16z" fill="#5a72d6" /></svg>
<div class="a hr" style="top:559.2px"></div>
<div class="a td" style="left:236px;top:561.1px;white-space:nowrap;">6</div>
<div class="a td" style="left:249px;top:561.1px;white-space:nowrap;letter-spacing:-0.117px;"><u>narabotka</u></div>
<div class="a td" style="left:344.3px;top:561.1px;white-space:nowrap;letter-spacing:-0.273px;"><u>Наработка</u></div>
<div class="a td" style="left:446.3px;top:561.1px;white-space:nowrap;letter-spacing:-0.16px;"><u>Дополнительные</u></div>
<div class="a td" style="left:538.6px;top:561.1px;white-space:nowrap;"><u>0</u></div>
<div class="a td" style="left:557.7px;top:561.1px;white-space:nowrap;letter-spacing:0.073px;"><u>Галочки</u></div>
<div class="a td" style="left:637.7px;top:561.1px;white-space:nowrap;letter-spacing:-0.299px;"><i>Не задано</i></div>
<div class="a td" style="left:802.4px;top:561.1px;white-space:nowrap;letter-spacing:-0.273px;"><u>Наработка</u></div>
<div class="a td" style="left:802.4px;top:577.6px;white-space:nowrap;letter-spacing:-0.033px;"><u>бетонотехники</u></div>
<div class="a td" style="left:926.5px;top:561.1px;white-space:nowrap;letter-spacing:-0.438px;"><u>as_cat_cust_narabotka</u></div>
<div class="a td" style="left:1246.4px;top:561.1px;white-space:nowrap;letter-spacing:-0.418px;"><u>Целое</u></div>
<div class="a td" style="left:1246.4px;top:577.6px;white-space:nowrap;letter-spacing:-0.187px;"><u>число</u></div>
<div class="a tg on" style="left:728px;top:561px"><span>Да</span><b></b></div>
<div class="a tg on" style="left:1079px;top:561px"><span>Да</span><b></b></div>
<div class="a tg on" style="left:1160px;top:561px"><span>Да</span><b></b></div>
<svg class="a" style="left:1299.7px;top:563.1px;" width="10" height="11.4" viewBox="0 0 448 512"><path d="M32 464a48 48 0 0 0 48 48h288a48 48 0 0 0 48-48V128H32zm272-256a16 16 0 0 1 32 0v224a16 16 0 0 1-32 0zm-96 0a16 16 0 0 1 32 0v224a16 16 0 0 1-32 0zm-96 0a16 16 0 0 1 32 0v224a16 16 0 0 1-32 0zM432 32H312l-9.4-18.7A24 24 0 0 0 281.1 0H166.8a23.72 23.72 0 0 0-21.4 13.3L136 32H16A16 16 0 0 0 0 48v32a16 16 0 0 0 16 16h416a16 16 0 0 0 16-16V48a16 16 0 0 0-16-16z" fill="#5a72d6" /></svg>
<div class="a hr" style="top:594.1px"></div>
<div class="a td" style="left:236px;top:596px;white-space:nowrap;">7</div>
<div class="a td" style="left:249px;top:596px;white-space:nowrap;letter-spacing:-0.414px;"><u>vysota_pod_ema</u></div>
<div class="a td" style="left:344.3px;top:596px;white-space:nowrap;letter-spacing:-0.288px;"><u>Высота подъема, м</u></div>
<div class="a td" style="left:446.3px;top:596px;white-space:nowrap;letter-spacing:-0.16px;"><u>Дополнительные</u></div>
<div class="a td" style="left:538.6px;top:596px;white-space:nowrap;"><u>0</u></div>
<div class="a td" style="left:557.7px;top:596px;white-space:nowrap;letter-spacing:0.073px;"><u>Галочки</u></div>
<div class="a td" style="left:637.7px;top:596px;white-space:nowrap;letter-spacing:-0.299px;"><i>Не задано</i></div>
<div class="a td" style="left:802.4px;top:596px;white-space:nowrap;letter-spacing:-0.301px;"><u>Высота подъема</u></div>
<div class="a td" style="left:802.4px;top:612.5px;white-space:nowrap;letter-spacing:-0.025px;"><u>автокрана</u></div>
<div class="a td" style="left:926.5px;top:596px;white-space:nowrap;letter-spacing:-0.516px;"><u>as_cat_cust_vysota_pod_ema</u></div>
<div class="a td" style="left:1246.4px;top:596px;white-space:nowrap;letter-spacing:-0.418px;"><u>Целое</u></div>
<div class="a td" style="left:1246.4px;top:612.5px;white-space:nowrap;letter-spacing:-0.187px;"><u>число</u></div>
<div class="a tg on" style="left:728px;top:595.9px"><span>Да</span><b></b></div>
<div class="a tg on" style="left:1079px;top:595.9px"><span>Да</span><b></b></div>
<div class="a tg on" style="left:1160px;top:595.9px"><span>Да</span><b></b></div>
<svg class="a" style="left:1299.7px;top:598px;" width="10" height="11.4" viewBox="0 0 448 512"><path d="M32 464a48 48 0 0 0 48 48h288a48 48 0 0 0 48-48V128H32zm272-256a16 16 0 0 1 32 0v224a16 16 0 0 1-32 0zm-96 0a16 16 0 0 1 32 0v224a16 16 0 0 1-32 0zm-96 0a16 16 0 0 1 32 0v224a16 16 0 0 1-32 0zM432 32H312l-9.4-18.7A24 24 0 0 0 281.1 0H166.8a23.72 23.72 0 0 0-21.4 13.3L136 32H16A16 16 0 0 0 0 48v32a16 16 0 0 0 16 16h416a16 16 0 0 0 16-16V48a16 16 0 0 0-16-16z" fill="#5a72d6" /></svg>
<div class="a hr" style="top:629.1px"></div>
<div class="a td" style="left:236px;top:631px;white-space:nowrap;">8</div>
<div class="a td" style="left:249px;top:631px;white-space:nowrap;letter-spacing:-0.146px;"><u>gruzopod_emnost2</u></div>
<div class="a td" style="left:344.3px;top:631px;white-space:nowrap;letter-spacing:-0.21px;"><u>Грузоподъемность,</u></div>
<div class="a td" style="left:344.3px;top:647.5px;white-space:nowrap;"><u>т</u></div>
<div class="a td" style="left:446.3px;top:631px;white-space:nowrap;letter-spacing:-0.16px;"><u>Дополнительные</u></div>
<div class="a td" style="left:538.6px;top:631px;white-space:nowrap;"><u>0</u></div>
<div class="a td" style="left:557.7px;top:631px;white-space:nowrap;letter-spacing:0.073px;"><u>Галочки</u></div>
<div class="a td" style="left:637.7px;top:631px;white-space:nowrap;letter-spacing:-0.299px;"><i>Не задано</i></div>
<div class="a td" style="left:802.4px;top:631px;white-space:nowrap;letter-spacing:-0.14px;"><u>Грузоподъемность</u></div>
<div class="a td" style="left:802.4px;top:647.5px;white-space:nowrap;letter-spacing:-0.2px;"><u>грузовых</u></div>
<div class="a td" style="left:926.5px;top:631px;white-space:nowrap;letter-spacing:-0.381px;"><u>as_cat_cust_gruzopod_emnost2</u></div>
<div class="a td" style="left:1246.4px;top:631px;white-space:nowrap;letter-spacing:-0.418px;"><u>Целое</u></div>
<div class="a td" style="left:1246.4px;top:647.5px;white-space:nowrap;letter-spacing:-0.187px;"><u>число</u></div>
<div class="a tg on" style="left:728px;top:630.9px"><span>Да</span><b></b></div>
<div class="a tg on" style="left:1079px;top:630.9px"><span>Да</span><b></b></div>
<div class="a tg on" style="left:1160px;top:630.9px"><span>Да</span><b></b></div>
<svg class="a" style="left:1299.7px;top:633px;" width="10" height="11.4" viewBox="0 0 448 512"><path d="M32 464a48 48 0 0 0 48 48h288a48 48 0 0 0 48-48V128H32zm272-256a16 16 0 0 1 32 0v224a16 16 0 0 1-32 0zm-96 0a16 16 0 0 1 32 0v224a16 16 0 0 1-32 0zm-96 0a16 16 0 0 1 32 0v224a16 16 0 0 1-32 0zM432 32H312l-9.4-18.7A24 24 0 0 0 281.1 0H166.8a23.72 23.72 0 0 0-21.4 13.3L136 32H16A16 16 0 0 0 0 48v32a16 16 0 0 0 16 16h416a16 16 0 0 0 16-16V48a16 16 0 0 0-16-16z" fill="#5a72d6" /></svg>
<div class="a hr" style="top:664px"></div>
<div class="a td" style="left:236px;top:665.9px;white-space:nowrap;">9</div>
<div class="a td" style="left:249px;top:665.9px;white-space:nowrap;letter-spacing:-0.126px;"><u>gruzopod_emnost</u></div>
<div class="a td" style="left:344.3px;top:665.9px;white-space:nowrap;letter-spacing:-0.14px;"><u>Грузоподъемность</u></div>
<div class="a td" style="left:446.3px;top:665.9px;white-space:nowrap;letter-spacing:-0.16px;"><u>Дополнительные</u></div>
<div class="a td" style="left:538.6px;top:665.9px;white-space:nowrap;"><u>0</u></div>
<div class="a td" style="left:557.7px;top:665.9px;white-space:nowrap;letter-spacing:0.073px;"><u>Галочки</u></div>
<div class="a td" style="left:637.7px;top:665.9px;white-space:nowrap;letter-spacing:-0.299px;"><i>Не задано</i></div>
<div class="a td" style="left:802.4px;top:665.9px;white-space:nowrap;letter-spacing:-0.14px;"><u>Грузоподъемность</u></div>
<div class="a td" style="left:926.5px;top:665.9px;white-space:nowrap;letter-spacing:-0.396px;"><u>as_cat_cust_gruzopod_emnost</u></div>
<div class="a td" style="left:1246.4px;top:665.9px;white-space:nowrap;letter-spacing:-0.418px;"><u>Целое</u></div>
<div class="a tg on" style="left:728px;top:665.8px"><span>Да</span><b></b></div>
<div class="a tg on" style="left:1079px;top:665.8px"><span>Да</span><b></b></div>
<div class="a tg on" style="left:1160px;top:665.8px"><span>Да</span><b></b></div>
<svg class="a" style="left:1299.7px;top:667.9px;" width="10" height="11.4" viewBox="0 0 448 512"><path d="M32 464a48 48 0 0 0 48 48h288a48 48 0 0 0 48-48V128H32zm272-256a16 16 0 0 1 32 0v224a16 16 0 0 1-32 0zm-96 0a16 16 0 0 1 32 0v224a16 16 0 0 1-32 0zm-96 0a16 16 0 0 1 32 0v224a16 16 0 0 1-32 0zM432 32H312l-9.4-18.7A24 24 0 0 0 281.1 0H166.8a23.72 23.72 0 0 0-21.4 13.3L136 32H16A16 16 0 0 0 0 48v32a16 16 0 0 0 16 16h416a16 16 0 0 0 16-16V48a16 16 0 0 0-16-16z" fill="#5a72d6" /></svg>
<div class="a" style="left:1321px;top:281px;width:30px;height:26px;background:#fff;border-radius:4px"></div>
<div class="a" style="left:1323px;top:283px;width:18px;height:20px;background:#6cc0d0"></div>
<svg class="a" style="left:1323.5px;top:286.5px;overflow:visible" width="18" height="14" viewBox="0 -0.5 18 14"><path d="M10.56 7.21 L11.63 8.39 L10.32 10.66 L8.76 10.33 L7.7 10.94 L7.21 12.46 L4.59 12.46 L4.1 10.94 L3.04 10.33 L1.48 10.66 L0.17 8.39 L1.24 7.21 L1.24 5.99 L0.17 4.81 L1.48 2.54 L3.04 2.87 L4.1 2.26 L4.59 0.74 L7.21 0.74 L7.7 2.26 L8.76 2.87 L10.32 2.54 L11.63 4.81 L10.56 5.99Z M3.7 6.6 a2.2 2.2 0 1 0 4.4 0 a2.2 2.2 0 1 0 -4.4 0Z M16.83 2.79 L17.46 3.4 L16.81 4.53 L15.97 4.29 L15.46 4.58 L15.25 5.43 L13.95 5.43 L13.74 4.58 L13.23 4.29 L12.39 4.53 L11.74 3.4 L12.37 2.79 L12.37 2.21 L11.74 1.6 L12.39 0.47 L13.23 0.71 L13.74 0.42 L13.95 -0.43 L15.25 -0.43 L15.46 0.42 L15.97 0.71 L16.81 0.47 L17.46 1.6 L16.83 2.21Z M13.6 2.5 a1 1 0 1 0 2 0 a1 1 0 1 0 -2 0Z M16.83 10.99 L17.46 11.6 L16.81 12.73 L15.97 12.49 L15.46 12.78 L15.25 13.63 L13.95 13.63 L13.74 12.78 L13.23 12.49 L12.39 12.73 L11.74 11.6 L12.37 10.99 L12.37 10.41 L11.74 9.8 L12.39 8.67 L13.23 8.91 L13.74 8.62 L13.95 7.77 L15.25 7.77 L15.46 8.62 L15.97 8.91 L16.81 8.67 L17.46 9.8 L16.83 10.41Z M13.6 10.7 a1 1 0 1 0 2 0 a1 1 0 1 0 -2 0Z" fill="#fff" fill-rule="evenodd"/></svg>
<svg class="a" style="left:1326px;top:264.5px;" width="13" height="10" viewBox="0 0 13 10"><path d="M5.8 0.9L2 5l3.8 4.1M11.6 0.9L7.8 5l3.8 4.1" fill="none" stroke="#7480d8" stroke-width="2.2"/></svg>
<div class="a" style="left:1270px;top:616px;width:54px;height:52px;background:#4a6bdb;border-radius:21px;box-shadow:0 2px 8px rgba(0,0,0,.15)"></div>
<div class="a" style="left:1281px;top:626.5px;width:32px;height:33px;background:#fff;border-radius:14px"></div>
<div class="a" style="left:1294.5px;top:635.5px;width:5.5px;height:5.5px;background:#4a6bdb;border-radius:3px"></div>
<div class="a" style="left:1294.5px;top:643px;width:5.5px;height:5.5px;background:#4a6bdb;border-radius:3px"></div>
<div class="a" style="left:1308.5px;top:614px;width:18px;height:18px;background:#d0021b;border-radius:9px;color:#fff;font-size:10px;font-weight:bold;line-height:18px;text-align:center">1</div>
</body></html>
